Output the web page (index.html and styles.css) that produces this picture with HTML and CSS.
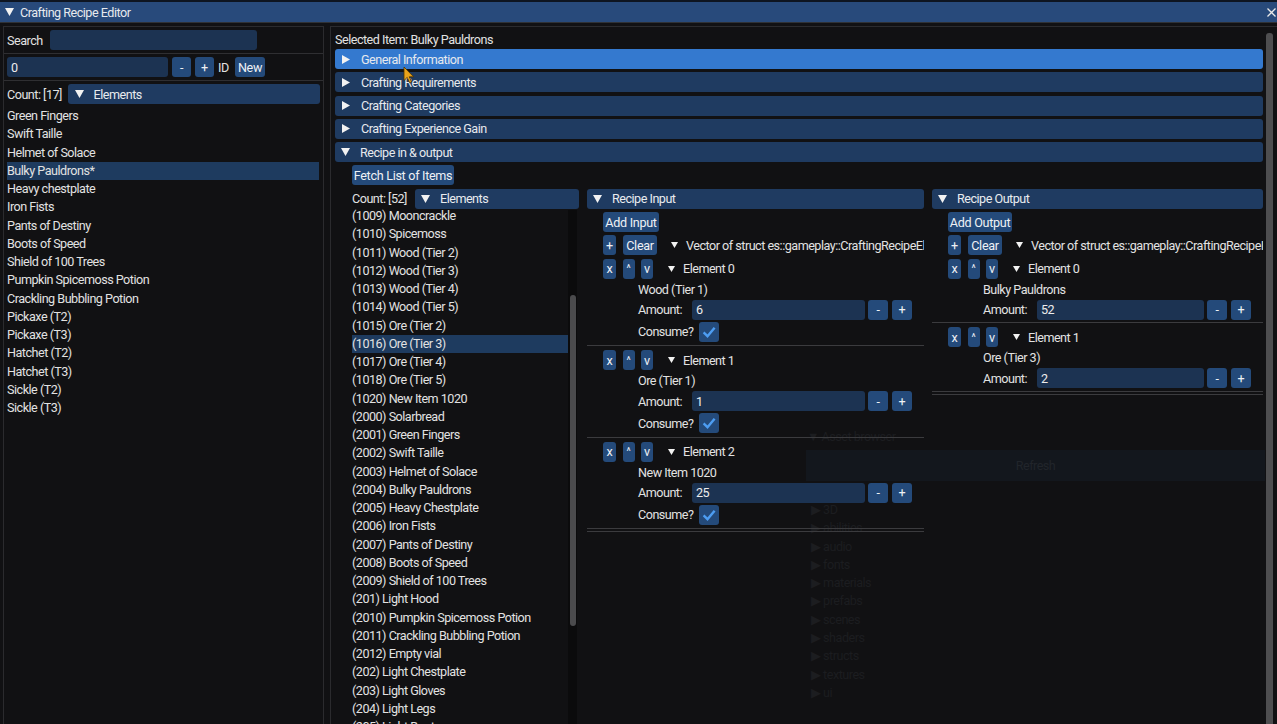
FILE: index.html
```html
<!DOCTYPE html>
<html>
<head>
<meta charset="utf-8">
<link rel="stylesheet" href="styles.css">
</head>
<body>
<div class="app">
  <div class="ghost">
    <div class="ghost-head">▼ Asset browser</div>
    <div class="ghost-btn">Refresh</div>
    <ul class="ghost-tree">
      <li>▶ 3D</li>
      <li>▶ abilities</li>
      <li>▶ audio</li>
      <li>▶ fonts</li>
      <li>▶ materials</li>
      <li>▶ prefabs</li>
      <li>▶ scenes</li>
      <li>▶ shaders</li>
      <li>▶ structs</li>
      <li>▶ textures</li>
      <li>▶ ui</li>
    </ul>
  </div>

  <div class="topstrip"></div>
  <div class="titlebar">
    <svg class="tri-d" width="9" height="8" viewBox="0 0 9 8"><polygon points="0,0 9,0 4.5,8" fill="#f2f2f2"/></svg>
    <span class="title">Crafting Recipe Editor</span>
    <svg class="close" width="9" height="9" viewBox="0 0 9 9"><path d="M0.5 0.5 L8.5 8.5 M8.5 0.5 L0.5 8.5" stroke="#e8e8e8" stroke-width="1.3"/></svg>
  </div>
  <div class="title-line"></div>
  <div class="main">
    <aside class="left">
      <div class="lrow">
        <span class="lbl search-lbl">Search</span>
        <div class="frame search-input"></div>
      </div>
      <div class="sep"></div>
      <div class="lrow">
        <div class="frame id-input">0</div>
        <div class="btn sq">-</div>
        <div class="btn sq">+</div>
        <span class="lbl id-lbl">ID</span>
        <div class="btn new-btn">New</div>
      </div>
      <div class="sep"></div>
      <div class="lrow">
        <span class="lbl count-lbl">Count: [17]</span>
        <div class="hdr hdr-left">
          <svg class="tri-d" width="9" height="8" viewBox="0 0 9 8"><polygon points="0,0 9,0 4.5,8" fill="#f2f2f2"/></svg>
          <span>Elements</span>
        </div>
      </div>
      <ul class="list left-list">
        <li>Green Fingers</li>
        <li>Swift Taille</li>
        <li>Helmet of Solace</li>
        <li class="sel">Bulky Pauldrons*</li>
        <li>Heavy chestplate</li>
        <li>Iron Fists</li>
        <li>Pants of Destiny</li>
        <li>Boots of Speed</li>
        <li>Shield of 100 Trees</li>
        <li>Pumpkin Spicemoss Potion</li>
        <li>Crackling Bubbling Potion</li>
        <li>Pickaxe (T2)</li>
        <li>Pickaxe (T3)</li>
        <li>Hatchet (T2)</li>
        <li>Hatchet (T3)</li>
        <li>Sickle (T2)</li>
        <li>Sickle (T3)</li>
      </ul>
    </aside>

    <section class="right">
      <div class="rcontent">
        <div class="selected-line">Selected Item: Bulky Pauldrons</div>
        <div class="chead hover">
          <svg class="tri-r" width="8" height="9" viewBox="0 0 8 9"><polygon points="0,0 8,4.5 0,9" fill="#f2f2f2"/></svg>
          <span>General Information</span>
        </div>
        <div class="chead">
          <svg class="tri-r" width="8" height="9" viewBox="0 0 8 9"><polygon points="0,0 8,4.5 0,9" fill="#f2f2f2"/></svg>
          <span>Crafting Requirements</span>
        </div>
        <div class="chead">
          <svg class="tri-r" width="8" height="9" viewBox="0 0 8 9"><polygon points="0,0 8,4.5 0,9" fill="#f2f2f2"/></svg>
          <span>Crafting Categories</span>
        </div>
        <div class="chead">
          <svg class="tri-r" width="8" height="9" viewBox="0 0 8 9"><polygon points="0,0 8,4.5 0,9" fill="#f2f2f2"/></svg>
          <span>Crafting Experience Gain</span>
        </div>
        <div class="chead">
          <svg class="tri-d2" width="9" height="8" viewBox="0 0 9 8"><polygon points="0,0 9,0 4.5,8" fill="#f2f2f2"/></svg>
          <span>Recipe in &amp; output</span>
        </div>

        <div class="recipe">
          <div class="btn fetch-btn">Fetch List of Items</div>
          <div class="cols">
            <div class="col col1">
              <div class="crow">
                <span class="lbl count2-lbl">Count: [52]</span>
                <div class="hdr hdr-mid">
                  <svg class="tri-d" width="9" height="8" viewBox="0 0 9 8"><polygon points="0,0 9,0 4.5,8" fill="#f2f2f2"/></svg>
                  <span>Elements</span>
                </div>
              </div>
              <div class="listwrap">
                <ul class="list mid-list">
                  <li>(1009) Mooncrackle</li>
                  <li>(1010) Spicemoss</li>
                  <li>(1011) Wood (Tier 2)</li>
                  <li>(1012) Wood (Tier 3)</li>
                  <li>(1013) Wood (Tier 4)</li>
                  <li>(1014) Wood (Tier 5)</li>
                  <li>(1015) Ore (Tier 2)</li>
                  <li class="sel">(1016) Ore (Tier 3)</li>
                  <li>(1017) Ore (Tier 4)</li>
                  <li>(1018) Ore (Tier 5)</li>
                  <li>(1020) New Item 1020</li>
                  <li>(2000) Solarbread</li>
                  <li>(2001) Green Fingers</li>
                  <li>(2002) Swift Taille</li>
                  <li>(2003) Helmet of Solace</li>
                  <li>(2004) Bulky Pauldrons</li>
                  <li>(2005) Heavy Chestplate</li>
                  <li>(2006) Iron Fists</li>
                  <li>(2007) Pants of Destiny</li>
                  <li>(2008) Boots of Speed</li>
                  <li>(2009) Shield of 100 Trees</li>
                  <li>(201) Light Hood</li>
                  <li>(2010) Pumpkin Spicemoss Potion</li>
                  <li>(2011) Crackling Bubbling Potion</li>
                  <li>(2012) Empty vial</li>
                  <li>(202) Light Chestplate</li>
                  <li>(203) Light Gloves</li>
                  <li>(204) Light Legs</li>
                  <li>(205) Light Boots</li>
                </ul>
                <div class="vtrack"><div class="vthumb"></div></div>
              </div>
            </div>

            <div class="col col2">
              <div class="hdr hdr-col">
                <svg class="tri-d" width="9" height="8" viewBox="0 0 9 8"><polygon points="0,0 9,0 4.5,8" fill="#f2f2f2"/></svg>
                <span>Recipe Input</span>
              </div>
              <div class="colbody">
                <div class="btn add-btn">Add Input</div>
                <div class="vrow">
                  <div class="btn plus-btn">+</div>
                  <div class="btn clear-btn">Clear</div>
                  <svg class="tri-s" width="7" height="6" viewBox="0 0 7 6"><polygon points="0,0 7,0 3.5,6" fill="#f2f2f2"/></svg>
                  <span class="tree-txt">Vector of struct es::gameplay::CraftingRecipeEl</span>
                </div>

                <div class="el">
                  <div class="elrow">
                    <div class="btn b-x">x</div>
                    <div class="btn b-up">^</div>
                    <div class="btn b-dn">v</div>
                    <svg class="tri-s tri-el" width="7" height="6" viewBox="0 0 7 6"><polygon points="0,0 7,0 3.5,6" fill="#f2f2f2"/></svg>
                    <span class="tree-txt">Element 0</span>
                  </div>
                  <div class="elbody">
                    <div class="name">Wood (Tier 1)</div>
                    <div class="amt-row">
                      <span class="lbl amt-lbl">Amount:</span>
                      <div class="frame amt-input">6</div>
                      <div class="btn pm minus">-</div>
                      <div class="btn pm">+</div>
                    </div>
                    <div class="cons-row">
                      <span class="lbl cons-lbl">Consume?</span>
                      <div class="check"><svg width="20" height="20" viewBox="0 0 20 20"><path d="M4.6 10.4 L8.5 14.2 L15.6 5.8" fill="none" stroke="#4d9df2" stroke-width="2.4"/></svg></div>
                    </div>
                  </div>
                  <div class="elsep"></div>
                </div>

                <div class="el">
                  <div class="elrow">
                    <div class="btn b-x">x</div>
                    <div class="btn b-up">^</div>
                    <div class="btn b-dn">v</div>
                    <svg class="tri-s tri-el" width="7" height="6" viewBox="0 0 7 6"><polygon points="0,0 7,0 3.5,6" fill="#f2f2f2"/></svg>
                    <span class="tree-txt">Element 1</span>
                  </div>
                  <div class="elbody">
                    <div class="name">Ore (Tier 1)</div>
                    <div class="amt-row">
                      <span class="lbl amt-lbl">Amount:</span>
                      <div class="frame amt-input">1</div>
                      <div class="btn pm minus">-</div>
                      <div class="btn pm">+</div>
                    </div>
                    <div class="cons-row">
                      <span class="lbl cons-lbl">Consume?</span>
                      <div class="check"><svg width="20" height="20" viewBox="0 0 20 20"><path d="M4.6 10.4 L8.5 14.2 L15.6 5.8" fill="none" stroke="#4d9df2" stroke-width="2.4"/></svg></div>
                    </div>
                  </div>
                  <div class="elsep"></div>
                </div>

                <div class="el">
                  <div class="elrow">
                    <div class="btn b-x">x</div>
                    <div class="btn b-up">^</div>
                    <div class="btn b-dn">v</div>
                    <svg class="tri-s tri-el" width="7" height="6" viewBox="0 0 7 6"><polygon points="0,0 7,0 3.5,6" fill="#f2f2f2"/></svg>
                    <span class="tree-txt">Element 2</span>
                  </div>
                  <div class="elbody">
                    <div class="name">New Item 1020</div>
                    <div class="amt-row">
                      <span class="lbl amt-lbl">Amount:</span>
                      <div class="frame amt-input">25</div>
                      <div class="btn pm minus">-</div>
                      <div class="btn pm">+</div>
                    </div>
                    <div class="cons-row">
                      <span class="lbl cons-lbl">Consume?</span>
                      <div class="check"><svg width="20" height="20" viewBox="0 0 20 20"><path d="M4.6 10.4 L8.5 14.2 L15.6 5.8" fill="none" stroke="#4d9df2" stroke-width="2.4"/></svg></div>
                    </div>
                  </div>
                  <div class="elsep"></div>
                </div>
                <div class="endsep"></div>
              </div>
            </div>

            <div class="col col3">
              <div class="hdr hdr-col">
                <svg class="tri-d" width="9" height="8" viewBox="0 0 9 8"><polygon points="0,0 9,0 4.5,8" fill="#f2f2f2"/></svg>
                <span>Recipe Output</span>
              </div>
              <div class="colbody">
                <div class="btn add-btn add-out">Add Output</div>
                <div class="vrow">
                  <div class="btn plus-btn">+</div>
                  <div class="btn clear-btn">Clear</div>
                  <svg class="tri-s" width="7" height="6" viewBox="0 0 7 6"><polygon points="0,0 7,0 3.5,6" fill="#f2f2f2"/></svg>
                  <span class="tree-txt">Vector of struct es::gameplay::CraftingRecipeI</span>
                </div>

                <div class="el">
                  <div class="elrow">
                    <div class="btn b-x">x</div>
                    <div class="btn b-up">^</div>
                    <div class="btn b-dn">v</div>
                    <svg class="tri-s tri-el" width="7" height="6" viewBox="0 0 7 6"><polygon points="0,0 7,0 3.5,6" fill="#f2f2f2"/></svg>
                    <span class="tree-txt">Element 0</span>
                  </div>
                  <div class="elbody">
                    <div class="name">Bulky Pauldrons</div>
                    <div class="amt-row">
                      <span class="lbl amt-lbl">Amount:</span>
                      <div class="frame amt-input">52</div>
                      <div class="btn pm minus">-</div>
                      <div class="btn pm">+</div>
                    </div>
                  </div>
                  <div class="elsep out-sep"></div>
                </div>

                <div class="el">
                  <div class="elrow">
                    <div class="btn b-x">x</div>
                    <div class="btn b-up">^</div>
                    <div class="btn b-dn">v</div>
                    <svg class="tri-s tri-el" width="7" height="6" viewBox="0 0 7 6"><polygon points="0,0 7,0 3.5,6" fill="#f2f2f2"/></svg>
                    <span class="tree-txt">Element 1</span>
                  </div>
                  <div class="elbody">
                    <div class="name">Ore (Tier 3)</div>
                    <div class="amt-row">
                      <span class="lbl amt-lbl">Amount:</span>
                      <div class="frame amt-input">2</div>
                      <div class="btn pm minus">-</div>
                      <div class="btn pm">+</div>
                    </div>
                  </div>
                  <div class="elsep out-sep"></div>
                </div>
                <div class="endsep"></div>
              </div>
            </div>
          </div>
        </div>
      </div>
      <div class="rscroll"></div>
    </section>
  </div>

  <svg class="cursor" width="12" height="18" viewBox="0 0 12 18"><path d="M1 1 L1 14.5 L4.2 11.5 L6.6 16.8 L8.6 15.9 L6.3 10.8 L10.6 10.8 Z" fill="#e9a31b" stroke="#4a3000" stroke-width="0.8"/></svg>
</div>
</body>
</html>
```

FILE: styles.css
```css
* { box-sizing: border-box; margin: 0; padding: 0; }
html { width: 1277px; height: 724px; overflow: hidden; background: #111113; }
body {
  width: 1277px; height: 724px; overflow: hidden; background: transparent;
  font-family: Roboto, "Liberation Sans", sans-serif;
  font-size: 12.6px;
  letter-spacing: -0.5px;
  color: #e2e2e2;
}
.app { position: relative; width: 1277px; height: 724px; overflow: hidden; }
ul { list-style: none; }

.topstrip { height: 2px; background: #0e1521; }
.titlebar {
  height: 20px; background: #284a7b; display: flex; align-items: center;
  padding-left: 5px; color: #e6e9ee;
}
.titlebar .title { margin-left: 6px; }
.titlebar .close { margin-left: auto; margin-right: 1px; }
.title-line { height: 4px; border-top: 1px solid #2f3135; }

.main { display: flex; height: 698px; padding-left: 3px; }

/* left panel */
.left {
  width: 321px; flex-shrink: 0; border: 1px solid #2b2b2e; border-bottom: none;
  padding: 3px 3px 0 3px;
}
.lrow { display: flex; align-items: center; height: 20px; }
.lbl { white-space: nowrap; }
.search-lbl { width: 43px; }
.frame {
  background: #1c3352; border-radius: 3px; height: 20px; display: flex; align-items: center;
  padding-left: 4px; color: #ececec;
}
.search-input { width: 207px; }
.id-input { width: 161px; }
.btn {
  background: #244a7a; border-radius: 3px; height: 20px; display: flex; align-items: center;
  justify-content: center; color: #eef1f5; white-space: nowrap; letter-spacing: -0.3px;
}
.sq { width: 19px; margin-left: 4px; }
.id-lbl { margin-left: 4px; width: 17px; }
.new-btn { width: 30px; }
.sep { height: 1px; background: #2f2f32; margin: 3px -3px; }
.count-lbl { width: 61px; }
.hdr {
  background: #1f3b61; border-radius: 3px; height: 20px; display: flex; align-items: center;
  padding-left: 7px; color: #e8ebef; white-space: nowrap; overflow: hidden;
}
.hdr .tri-d { margin-right: 10px; flex-shrink: 0; }
.hdr-left { width: 254px; }

.list li { height: 18.25px; line-height: 18.25px; white-space: nowrap; overflow: hidden; }
.left-list { margin-top: 3px; }
.left-list li.sel { background: #1e3b5f; width: 312px; }

/* right panel */
.right {
  margin-left: 6px; flex: 1; display: flex; border: 1px solid #2b2b2e; border-bottom: none;
  border-right: none; padding: 3px 0 0 4px;
}
.rcontent { width: 928px; flex-shrink: 0; }
.rscroll {
  width: 7px; margin: 3px 0 0 3px; background: #4e4e50; border-radius: 3px 3px 0 0;
}
.selected-line { height: 19px; line-height: 19px; }
.chead {
  height: 20px; margin-bottom: 3.25px; border-radius: 3px; background: #1f3b61;
  display: flex; align-items: center; padding-left: 6px; color: #e6e9ee;
}
.chead.hover { background: #3479cf; }
.chead .tri-r { margin-right: 11px; margin-left: 1px; }
.chead .tri-d2 { margin-right: 10px; }

.recipe { padding-left: 17px; }
.fetch-btn { width: 102px; margin-bottom: 3.25px; }
.cols { display: flex; gap: 8px; }
.col { overflow: hidden; height: 536px; }
.col1 { width: 227px; }
.col2 { width: 337px; }
.col3 { width: 331px; }

.crow { display: flex; align-items: center; height: 20px; }
.count2-lbl { width: 63px; }
.hdr-mid { flex: 1; padding-left: 6px; }
.listwrap { display: flex; margin-top: -1.5px; }
.mid-list { width: 216px; }
.mid-list li.sel { background: #1e3b5f; }
.vtrack { width: 9px; margin-top: 3px; height: 520px; background: #0b0b0c; padding: 85px 1px 0 2px; }
.vthumb { height: 331px; background: #4b4b4d; border-radius: 3px; width: 6px; }

.hdr-col { padding-left: 6px; }
.hdr-col .tri-d { margin-right: 10px; }
.colbody { padding-left: 16px; }
.add-btn { width: 56px; margin-top: 3.5px; }
.add-out { width: 64px; }
.vrow { display: flex; align-items: center; height: 20px; margin-top: 3.25px; white-space: nowrap; overflow: hidden; }
.plus-btn { width: 13px; flex-shrink: 0; }
.clear-btn { width: 34px; margin-left: 7px; flex-shrink: 0; }
.vrow .tri-s { margin-left: 14px; flex-shrink: 0; }
.tree-txt { margin-left: 8px; white-space: nowrap; }

.el { margin-top: 3.5px; }
.el + .el { margin-top: 4px; }
.elrow { display: flex; align-items: center; height: 20px; }
.b-x { width: 13px; }
.b-up { width: 12px; margin-left: 6.5px; font-size: 10px; }
.b-dn { width: 12px; margin-left: 6.5px; }
.tri-el { margin-left: 15px; }
.elbody { padding-left: 35px; }
.name { height: 18px; line-height: 18px; margin-top: 2px; }
.amt-row { display: flex; align-items: center; height: 20px; margin-top: 1px; margin-right: 12px; }
.amt-lbl { width: 54px; flex-shrink: 0; }
.amt-input { flex: 1; }
.pm { width: 20px; margin-left: 4px; flex-shrink: 0; }
.pm.minus { margin-left: 3px; }
.cons-row { display: flex; align-items: center; height: 20px; margin-top: 2px; }
.cons-lbl { width: 61px; }
.check { width: 20px; height: 20px; background: #244a7a; border-radius: 3px; }
.check svg { display: block; }
.elsep { height: 1px; background: #3b3b3e; margin: 3.5px 0 0 -16px; }
.out-sep { margin-top: 2.5px; }
.endsep { height: 1px; background: #3b3b3e; margin: 2px 0 0 -16px; }

/* faint background window bleeding through the editor */
.ghost {
  position: absolute; z-index: -1; left: 797px; top: 428px; width: 468px; height: 280px;
  color: #1c1d20;
}
.ghost-head { position: absolute; left: 10px; top: 0; height: 18px; line-height: 18px; }
.ghost-btn {
  position: absolute; left: 9px; top: 22px; right: 0; height: 31px; background: #13171d;
  display: flex; align-items: center; justify-content: center; color: #21252b;
}
.ghost-tree { position: absolute; left: 14px; top: 73px; }
.ghost-tree li { height: 18.3px; line-height: 18.3px; }

.cursor { position: absolute; left: 403px; top: 66px; }
```
